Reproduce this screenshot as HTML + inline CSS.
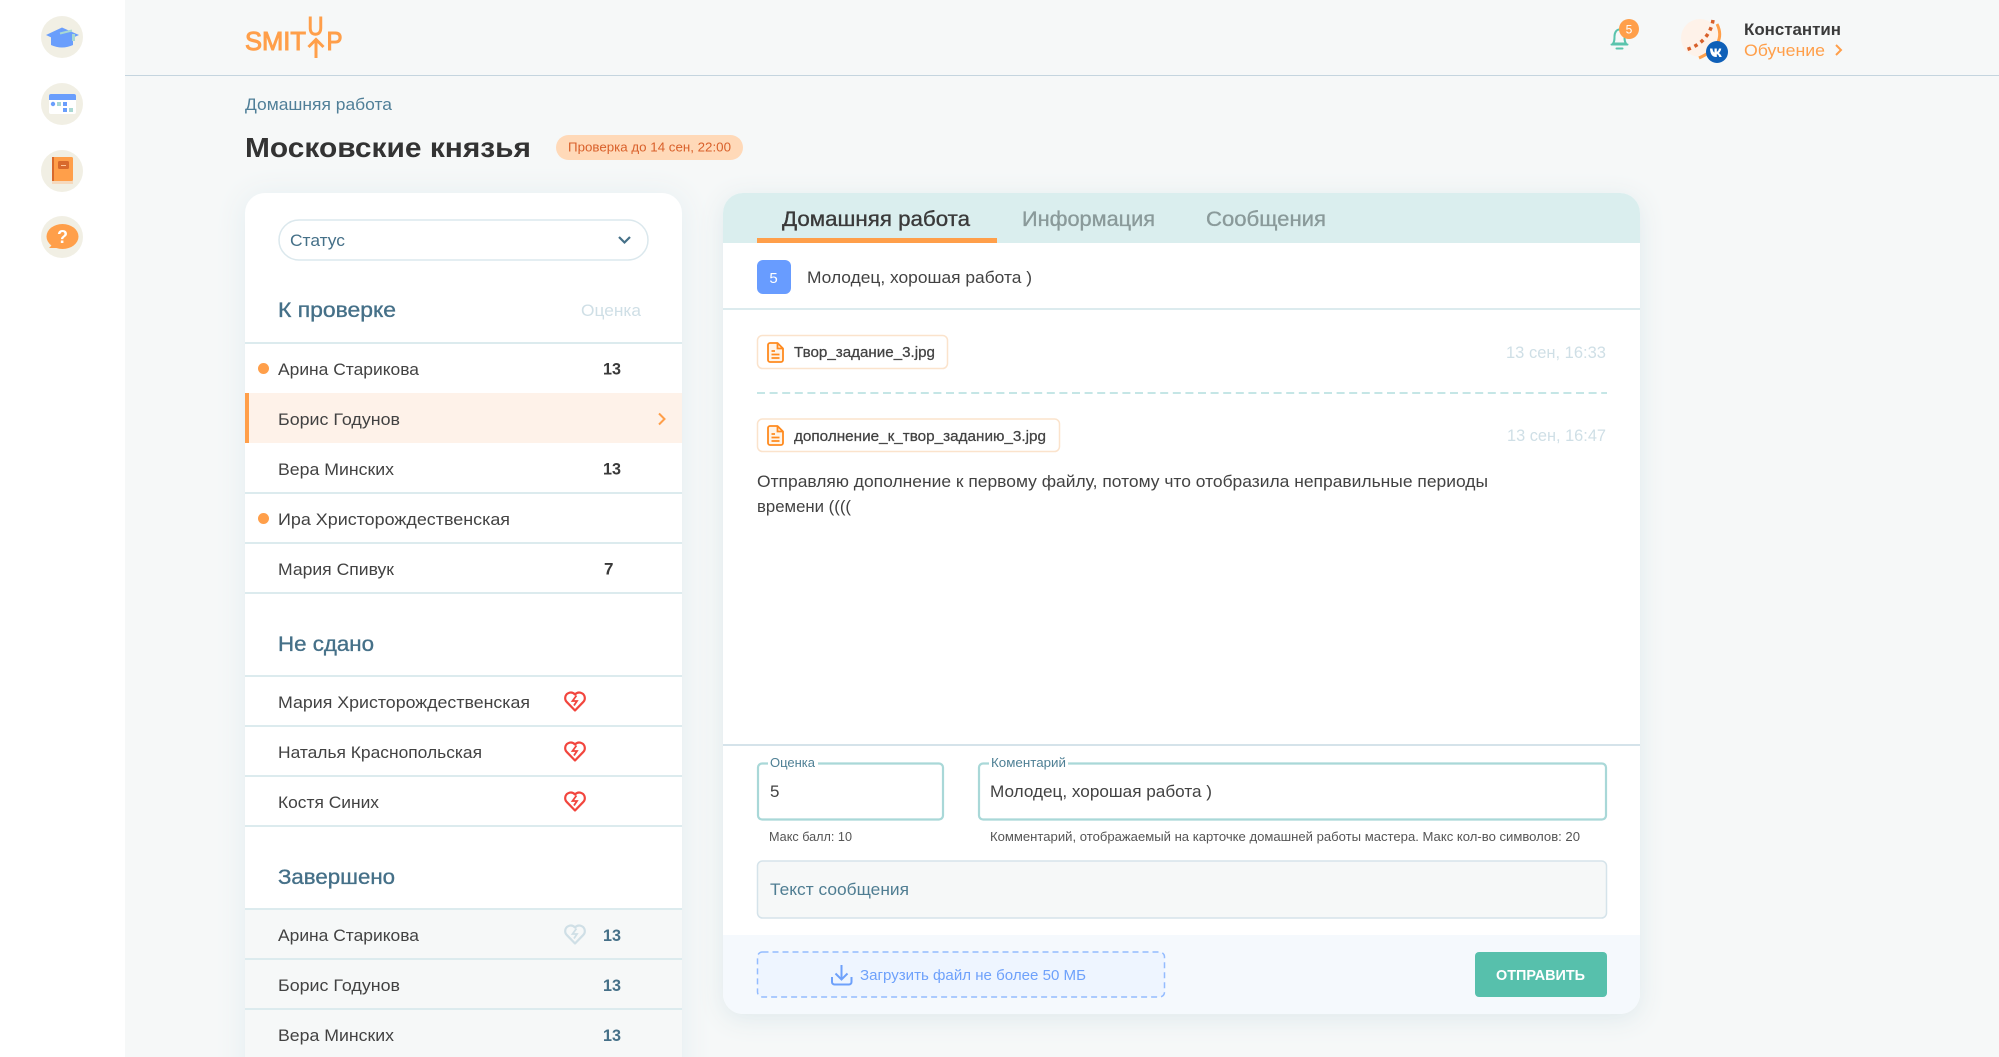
<!DOCTYPE html>
<html lang="ru"><head><meta charset="utf-8"><title>Домашняя работа</title>
<style>
html,body{margin:0;padding:0;background:#f6f8f8;width:1999px;height:1057px;overflow:hidden}
svg{display:block;filter:blur(.35px)}
text{font-family:"Liberation Sans","DejaVu Sans",sans-serif;font-size:17px;fill:#424242}
.h{font-size:21px;fill:#457088;stroke:#457088;stroke-width:.35px}
.s{font-weight:bold;fill:#3a3a3a}
.b{fill:#457088;font-weight:bold}
.m{stroke:#424242;stroke-width:.25px}
.l{fill:#4f8095;font-size:13px}
.t{font-size:13px;fill:#555}
.logo{font-size:26px;fill:#ff9f4a;stroke:#ff9f4a;stroke-width:1px}
</style></head><body>
<svg width="1999" height="1057" viewBox="0 0 1999 1057" xmlns="http://www.w3.org/2000/svg">
<defs>
<symbol id="heart" viewBox="0 0 22 21" overflow="visible"><path d="M11 19.500L2.600 10.800C.2 8.200 1 3.800 4 2.300 6.600 1 9.200 1.600 11 3.500 12.800 1.600 15.400 1 18 2.300 21 3.800 21.800 8.200 19.400 10.800Z" fill="none" stroke="currentColor" stroke-width="2.200" stroke-linejoin="round"/><path d="M12.500 4.500L8.500 10H13L10 14.500" fill="none" stroke="currentColor" stroke-width="1.800"/></symbol>
<symbol id="file" viewBox="0 0 17 21" overflow="visible"><path d="M1 3a2 2 0 0 1 2-2H10.500L16 6.500V18a2 2 0 0 1-2 2H3a2 2 0 0 1-2-2Z" fill="#fff4e8" stroke="#ff8a1e" stroke-width="1.800" stroke-linejoin="round"/><path d="M10.500 1V6.500H16M4.500 9H8M4.500 12.500H12.500M4.500 16H12.500" fill="none" stroke="#ff8a1e" stroke-width="1.800"/></symbol>
</defs>
<rect width="1999" height="1057" fill="#f6f8f8"/>
<rect width="125" height="1057" fill="#fff"/>
<rect x="125" y="75" width="1874" height="1" fill="#c5d5df"/>

<!-- sidebar -->
<circle cx="62" cy="37" r="21" fill="#f1efe4"/>
<path d="M46 35L62 27.500L79 35L62 42.500Z" fill="#6a9efc"/><path d="M51 37L62 42L73 37V45Q62 50 51 45Z" fill="#6a9efc"/><path d="M60 33.500L72 30.500" fill="none" stroke="#a8d8d2" stroke-width="2"/><rect x="72" y="34" width="3" height="7" fill="#a8d8d2"/>
<circle cx="62" cy="104" r="21" fill="#f1efe4"/>
<rect x="49" y="94" width="27" height="20" rx="2" fill="#fff"/><path d="M49 100V96a2 2 0 0 1 2-2H74a2 2 0 0 1 2 2V100Z" fill="#6a9efc"/>
<circle cx="53" cy="104" r="2.200" fill="#6a9efc"/><rect x="57" y="102" width="4" height="4" fill="#a8d8d2"/><rect x="63" y="102" width="4" height="4" fill="#6a9efc"/><rect x="63" y="108" width="4" height="4" fill="#6a9efc"/><rect x="69" y="108" width="4" height="4" fill="#a8d8d2"/>
<circle cx="62" cy="171" r="21" fill="#f1efe4"/>
<rect x="52" y="178" width="21" height="6" fill="#f5d9bd"/><rect x="52" y="157" width="21" height="24" rx="1.500" fill="#ff9f4a"/><rect x="52" y="157" width="2" height="24" fill="#d8692c"/><rect x="58" y="161" width="11" height="8" rx="1.500" fill="#d8692c"/><rect x="61" y="165" width="5" height="1" fill="#ffc79a"/>
<circle cx="62" cy="237" r="21" fill="#f1efe4"/>
<ellipse cx="62.500" cy="236.500" rx="16" ry="12.500" fill="#ff9f4a"/><path d="M53 244L49 248L58 248Z" fill="#ff9f4a"/>
<text x="62.500" y="243" text-anchor="middle" style="font-size:18px;font-weight:bold;fill:#fff">?</text>

<!-- header -->
<text x="245" y="50" textLength="61" lengthAdjust="spacingAndGlyphs" class="logo">SMIT</text>
<text x="307.500" y="35" textLength="16" lengthAdjust="spacingAndGlyphs" class="logo">U</text>
<text x="326.500" y="50" textLength="16" lengthAdjust="spacingAndGlyphs" class="logo">P</text>
<path d="M316 58V39M308.500 47L316 39.500L323.500 47" fill="none" stroke="#ff9f4a" stroke-width="3"/>

<path d="M1613 43.500c1.500-2 1.500-4 1.500-7 0-4 2-7 5-7s5 3 5 7c0 3 0 5 1.500 7ZM1611.500 44.500H1627.500M1616.500 48.500H1622.500" fill="none" stroke="#5ac4ad" stroke-width="2" stroke-linejoin="round" stroke-linecap="round"/>
<circle cx="1629" cy="29" r="10" fill="#ff9f4a"/><text x="1629" y="33.500" text-anchor="middle" style="font-size:12px;fill:#fff">5</text>
<circle cx="1700" cy="38" r="19" fill="#fef2e9"/>
<path d="M1717 24C1724 38 1717 50 1699 58" fill="none" stroke="#ff9f4a" stroke-width="3"/>
<path d="M1713 20C1711 34 1701 46 1685 50" fill="none" stroke="#d8602a" stroke-width="3.500" stroke-dasharray="3.500 4"/>
<circle cx="1717" cy="52" r="11" fill="#0f60b8"/>
<path d="M1710 48.500h2.500c.2 2.500 1.200 3.800 2 4v-4h2.300v3.300c.9-.2 1.800-1.300 2.200-3.300h2.300c-.4 2.300-1.600 3.800-2.500 4.500 1 .6 2.300 1.900 3 4h-2.500c-.5-1.600-1.500-2.700-2.500-2.900v2.900h-.6c-3.800 0-6-2.700-6.200-8.500Z" fill="#fff"/>
<text x="1744" y="35" textLength="97" lengthAdjust="spacingAndGlyphs" class="s" style="font-size:17px">Константин</text>
<text x="1744" y="56" textLength="81" lengthAdjust="spacingAndGlyphs" style="fill:#ff9f4a">Обучение</text>
<path d="M1836 45L1841 50L1836 55" fill="none" stroke="#ff9f4a" stroke-width="2"/>

<text x="245" y="110" textLength="147" lengthAdjust="spacingAndGlyphs" style="fill:#507f98">Домашняя работа</text>
<text x="245" y="157" textLength="286" lengthAdjust="spacingAndGlyphs" style="font-size:28px;font-weight:bold;fill:#333">Московские князья</text>
<rect x="556" y="135" width="187" height="25" rx="12.500" fill="#ffd9b8"/>
<text x="568" y="151.500" textLength="163" lengthAdjust="spacingAndGlyphs" style="font-size:13px;fill:#d9602a">Проверка до 14 сен, 22:00</text>

<!-- left card -->
<rect x="245" y="193" width="437" height="900" rx="20" fill="#fff" style="filter:drop-shadow(0 3px 14px #e3edf1)"/>
<rect x="279" y="220" width="369" height="40" rx="20" fill="#fff" stroke="#dbe8ed" stroke-width="1.500"/>
<text x="290" y="246" textLength="55" lengthAdjust="spacingAndGlyphs" style="fill:#457088">Статус</text>
<path d="M619 237L624.500 242.500L630 237" fill="none" stroke="#457088" stroke-width="2.200"/>
<text x="278" y="317" textLength="118" lengthAdjust="spacingAndGlyphs" class="h">К проверке</text>
<text x="581" y="316" textLength="60" lengthAdjust="spacingAndGlyphs" style="fill:#cfdfe6">Оценка</text>

<rect x="245" y="393" width="437" height="50" fill="#fef2e9"/><rect x="245" y="393" width="4" height="50" fill="#ff9f4a"/>
<g fill="#dcebee">
<rect x="245" y="342" width="437" height="2"/><rect x="245" y="492" width="437" height="2"/><rect x="245" y="542" width="437" height="2"/><rect x="245" y="592" width="437" height="2"/>
<rect x="245" y="675" width="437" height="2"/><rect x="245" y="725" width="437" height="2"/><rect x="245" y="775" width="437" height="2"/><rect x="245" y="825" width="437" height="2"/>
</g>
<circle cx="263.500" cy="368.500" r="5.500" fill="#ff9f4a"/><circle cx="263.500" cy="518.500" r="5.500" fill="#ff9f4a"/>
<text x="278" y="375" textLength="141" lengthAdjust="spacingAndGlyphs">Арина Старикова</text>
<text x="603" y="374.500" textLength="18" lengthAdjust="spacingAndGlyphs" class="s">13</text>
<text x="278" y="425" textLength="122" lengthAdjust="spacingAndGlyphs">Борис Годунов</text>
<path d="M659 413.500L664.500 419L659 424.500" fill="none" stroke="#ff9f4a" stroke-width="2"/>
<text x="278" y="475" textLength="116" lengthAdjust="spacingAndGlyphs">Вера Минских</text>
<text x="603" y="474.500" textLength="18" lengthAdjust="spacingAndGlyphs" class="s">13</text>
<text x="278" y="525" textLength="232" lengthAdjust="spacingAndGlyphs">Ира Христорождественская</text>
<text x="278" y="575" textLength="116" lengthAdjust="spacingAndGlyphs">Мария Спивук</text>
<text x="604" y="574.500" class="s">7</text>

<text x="278" y="651" textLength="96" lengthAdjust="spacingAndGlyphs" class="h">Не сдано</text>
<text x="278" y="708" textLength="252" lengthAdjust="spacingAndGlyphs">Мария Христорождественская</text>
<use href="#heart" x="564" y="691" width="22" height="21" style="color:#f2453d"/>
<text x="278" y="758" textLength="204" lengthAdjust="spacingAndGlyphs">Наталья Краснопольская</text>
<use href="#heart" x="564" y="741" width="22" height="21" style="color:#f2453d"/>
<text x="278" y="808" textLength="101" lengthAdjust="spacingAndGlyphs">Костя Синих</text>
<use href="#heart" x="564" y="791" width="22" height="21" style="color:#f2453d"/>

<text x="278" y="884" textLength="117" lengthAdjust="spacingAndGlyphs" class="h">Завершено</text>
<rect x="245" y="909" width="437" height="148" fill="#f6f8f8"/>
<g fill="#dcebee"><rect x="245" y="908" width="437" height="2"/><rect x="245" y="958" width="437" height="2"/><rect x="245" y="1008" width="437" height="2"/></g>
<text x="278" y="941" textLength="141" lengthAdjust="spacingAndGlyphs">Арина Старикова</text>
<use href="#heart" x="564" y="924" width="22" height="21" style="color:#cfdfe6"/>
<text x="603" y="941" textLength="18" lengthAdjust="spacingAndGlyphs" class="b">13</text>
<text x="278" y="991" textLength="122" lengthAdjust="spacingAndGlyphs">Борис Годунов</text>
<text x="603" y="991" textLength="18" lengthAdjust="spacingAndGlyphs" class="b">13</text>
<text x="278" y="1041" textLength="116" lengthAdjust="spacingAndGlyphs">Вера Минских</text>
<text x="603" y="1041" textLength="18" lengthAdjust="spacingAndGlyphs" class="b">13</text>

<!-- right card -->
<rect x="723" y="193" width="917" height="821" rx="20" fill="#fff" style="filter:drop-shadow(0 5px 12px #dfe9ec)"/>
<path d="M723 243V213a20 20 0 0 1 20-20H1620a20 20 0 0 1 20 20V243Z" fill="#daeeee"/>
<rect x="757" y="238" width="240" height="5" fill="#ff9f4a"/>
<text x="782" y="226" textLength="188" lengthAdjust="spacingAndGlyphs" class="h" style="fill:#3a3a3a;stroke:#3a3a3a">Домашняя работа</text>
<text x="1022" y="226" textLength="133" lengthAdjust="spacingAndGlyphs" class="h" style="fill:#8a9a9a;stroke:#8a9a9a">Информация</text>
<text x="1206" y="226" textLength="120" lengthAdjust="spacingAndGlyphs" class="h" style="fill:#8a9a9a;stroke:#8a9a9a">Сообщения</text>

<rect x="757" y="260" width="34" height="34" rx="6" fill="#689cff"/>
<text x="773.500" y="283" text-anchor="middle" style="font-size:15px;fill:#fff">5</text>
<text x="807" y="283" textLength="225" lengthAdjust="spacingAndGlyphs">Молодец, хорошая работа )</text>
<rect x="723" y="308" width="917" height="2" fill="#dcebee"/>

<rect x="757.500" y="335.500" width="190" height="33" rx="5" fill="#fff" stroke="#fbe3cc" stroke-width="1.500"/>
<use href="#file" x="767" y="342" width="17" height="21"/>
<text x="794" y="357" textLength="141" lengthAdjust="spacingAndGlyphs" class="m" style="font-size:15px">Твор_задание_3.jpg</text>
<text x="1506" y="358" textLength="100" lengthAdjust="spacingAndGlyphs" style="fill:#cfdfe6">13 сен, 16:33</text>
<path d="M757 393H1607" stroke="#c5e6e6" stroke-width="2" stroke-dasharray="8 4.600"/>
<rect x="757.500" y="419" width="302" height="32.500" rx="5" fill="#fff" stroke="#fbe3cc" stroke-width="1.500"/>
<use href="#file" x="767" y="425" width="17" height="21"/>
<text x="794" y="441" textLength="252" lengthAdjust="spacingAndGlyphs" class="m" style="font-size:15px">дополнение_к_твор_заданию_3.jpg</text>
<text x="1507" y="441" textLength="99" lengthAdjust="spacingAndGlyphs" style="fill:#cfdfe6">13 сен, 16:47</text>
<text x="757" y="487" textLength="731" lengthAdjust="spacingAndGlyphs">Отправляю дополнение к первому файлу, потому что отобразила неправильные периоды</text>
<text x="757" y="512" textLength="94" lengthAdjust="spacingAndGlyphs">времени ((((</text>

<rect x="723" y="744" width="917" height="2" fill="#d5e3ea"/>
<rect x="758" y="763.500" width="185" height="56" rx="4" fill="#fff" stroke="#a9d8d8" stroke-width="2.200"/>
<rect x="768" y="758" width="50" height="12" fill="#fff"/>
<text x="770" y="767" textLength="45" lengthAdjust="spacingAndGlyphs" class="l">Оценка</text>
<text x="770" y="797">5</text>
<rect x="979" y="763.500" width="627" height="56" rx="4" fill="#fff" stroke="#a9d8d8" stroke-width="2.200"/>
<rect x="989" y="758" width="79" height="12" fill="#fff"/>
<text x="991" y="767" textLength="75" lengthAdjust="spacingAndGlyphs" class="l">Коментарий</text>
<text x="990" y="797" textLength="222" lengthAdjust="spacingAndGlyphs">Молодец, хорошая работа )</text>
<text x="769" y="841" textLength="83" lengthAdjust="spacingAndGlyphs" class="t">Макс балл: 10</text>
<text x="990" y="841" textLength="590" lengthAdjust="spacingAndGlyphs" class="t">Комментарий, отображаемый на карточке домашней работы мастера. Макс кол-во символов: 20</text>
<rect x="757.500" y="861" width="849" height="57" rx="5" fill="#f6f8f8" stroke="#d5e3ea" stroke-width="1.500"/>
<text x="770" y="895" textLength="139" lengthAdjust="spacingAndGlyphs" style="fill:#4f7d92">Текст сообщения</text>

<path d="M723 935H1640V994a20 20 0 0 1-20 20H743a20 20 0 0 1-20-20Z" fill="#f5f9fd"/>
<rect x="757.500" y="952" width="407" height="45" rx="5" fill="#eef5ff" stroke="#94bcff" stroke-width="1.500" stroke-dasharray="6 4"/>
<path d="M841.500 965V979M835.500 973.500L841.500 979.500L847.500 973.500M832 977V982a2.500 2.500 0 0 0 2.500 2.500H849a2.500 2.500 0 0 0 2.500-2.500V977" fill="none" stroke="#6ea1fb" stroke-width="2"/>
<text x="860" y="980" textLength="226" lengthAdjust="spacingAndGlyphs" style="font-size:15px;fill:#6ea1fb">Загрузить файл не более 50 МБ</text>
<rect x="1475" y="952" width="132" height="45" rx="4" fill="#57c0ac"/>
<text x="1496" y="980" textLength="89" lengthAdjust="spacingAndGlyphs" style="font-size:15px;font-weight:bold;fill:#fff">ОТПРАВИТЬ</text>
</svg>
</body></html>
